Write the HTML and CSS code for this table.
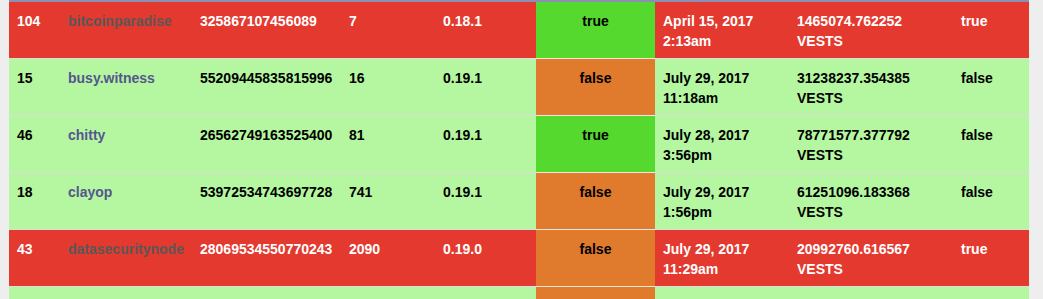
FILE: index.html
```html
<!DOCTYPE html>
<html>
<head>
<meta charset="utf-8">
<link rel="stylesheet" href="styles.css">
</head>
<body>
<div class="wrap">
<table class="witnesses">
<colgroup>
<col class="c1"><col class="c2"><col class="c3"><col class="c4"><col class="c5"><col class="c6"><col class="c7"><col class="c8"><col class="c9">
</colgroup>
<tbody>
<tr class="bad">
<td>104</td><td><a class="name">bitcoinparadise</a></td><td>325867107456089</td><td>7</td><td>0.18.1</td><td class="st yes">true</td><td>April 15, 2017<br>2:13am</td><td>1465074.762252<br>VESTS</td><td>true</td>
</tr>
<tr class="ok">
<td>15</td><td><a class="name">busy.witness</a></td><td>55209445835815996</td><td>16</td><td>0.19.1</td><td class="st no">false</td><td>July 29, 2017<br>11:18am</td><td>31238237.354385<br>VESTS</td><td>false</td>
</tr>
<tr class="ok">
<td>46</td><td><a class="name">chitty</a></td><td>26562749163525400</td><td>81</td><td>0.19.1</td><td class="st yes">true</td><td>July 28, 2017<br>3:56pm</td><td>78771577.377792<br>VESTS</td><td>false</td>
</tr>
<tr class="ok">
<td>18</td><td><a class="name">clayop</a></td><td>53972534743697728</td><td>741</td><td>0.19.1</td><td class="st no">false</td><td>July 29, 2017<br>1:56pm</td><td>61251096.183368<br>VESTS</td><td>false</td>
</tr>
<tr class="bad">
<td>43</td><td><a class="name">datasecuritynode</a></td><td>28069534550770243</td><td>2090</td><td>0.19.0</td><td class="st no">false</td><td>July 29, 2017<br>11:29am</td><td>20992760.616567<br>VESTS</td><td>true</td>
</tr>
<tr class="ok">
<td></td><td></td><td></td><td></td><td></td><td class="st no"></td><td><br></td><td><br></td><td></td>
</tr>
</tbody>
</table>
</div>
</body>
</html>
```

FILE: styles.css
```css
html, body {
  margin: 0;
  padding: 0;
  background: #eeeeee;
  height: 299px;
  overflow: hidden;
}
.wrap {
  padding-left: 9px;
  height: 299px;
  overflow: hidden;
}
.witnesses {
  border-collapse: collapse;
  table-layout: fixed;
  width: 1020px;
  border-top: 2px solid #8c8fb4;
  font-family: "Liberation Sans", Arial, sans-serif;
  font-size: 14px;
  font-weight: bold;
  line-height: 20px;
}
.c1 { width: 51px; }
.c2 { width: 132px; }
.c3 { width: 149px; }
.c4 { width: 94px; }
.c5 { width: 101px; }
.c6 { width: 119px; }
.c7 { width: 134px; }
.c8 { width: 164px; }
.c9 { width: 76px; }
.witnesses td {
  padding: 9px 8px 7px 8px;
  height: 40px;
  vertical-align: top;
  white-space: nowrap;
  border-top: 1px solid #dcdcdc;
}
.bad { background: #e3392e; color: #ffffff; }
.ok { background: #b5f7a0; color: #000000; }
.name { text-decoration: none; }
.bad .name { color: #5c5757; }
.ok .name { color: #555590; }
.witnesses td.st {
  text-align: center;
  color: #000000;
  border-top: 1px solid #f0e8e0;
}
.yes { background: #55d92f; }
.no { background: #e07b2e; }
```
